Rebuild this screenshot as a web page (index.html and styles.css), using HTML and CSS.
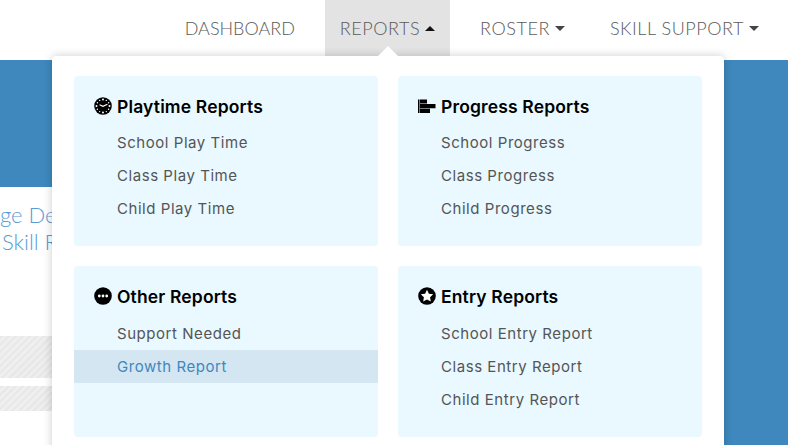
FILE: index.html
```html
<!DOCTYPE html>
<html lang="en">

<head>
    <meta charset="UTF-8">
    <meta name="viewport" content="width=device-width, initial-scale=1.0">
    <title>Reports</title>
    <link rel="stylesheet" href="styles.css">
</head>

<body>
    <nav class="navbar">
        <a class="nav_link">DASHBOARD</a>
        <a class="nav_link active">REPORTS<span class="caret up"></span></a>
        <a class="nav_link">ROSTER<span class="caret"></span></a>
        <a class="nav_link">SKILL SUPPORT<span class="caret"></span></a>
    </nav>

    <div class="hero"></div>

    <div class="page">
        <div class="main">
            <div class="title">ge Details</div>
            <div class="title">Skill Report</div>
            <div class="hatch tall"></div>
            <div class="hatch short"></div>
        </div>
        <div class="side"></div>
    </div>

    <!-- dropdown under REPORTS -->
    <div class="dropdown">
        <span class="notch"></span>
        <div class="panel">
            <h4>
                <svg class="icon" viewBox="0 0 18 18">
                    <circle cx="9" cy="9" r="8.8" fill="#000" />
                    <g fill="#fff">
                        <circle cx="9" cy="2.5" r="1" />
                        <circle cx="9" cy="15.5" r="1" />
                        <circle cx="2.5" cy="9" r="1" />
                        <circle cx="15.5" cy="9" r="1" />
                        <circle cx="5.7" cy="3.4" r=".7" />
                        <circle cx="12.3" cy="3.4" r=".7" />
                        <circle cx="3.4" cy="5.7" r=".7" />
                        <circle cx="14.6" cy="5.7" r=".7" />
                        <circle cx="3.4" cy="12.3" r=".7" />
                        <circle cx="14.6" cy="12.3" r=".7" />
                        <circle cx="5.7" cy="14.6" r=".7" />
                        <circle cx="12.3" cy="14.6" r=".7" />
                    </g>
                    <path d="M5.500 7.800 9 9.300 13.400 7.200" fill="none" stroke="#fff" stroke-width="1.2" />
                </svg>
                Playtime Reports
            </h4>
            <ul>
                <li>School Play Time</li>
                <li>Class Play Time</li>
                <li>Child Play Time</li>
            </ul>
        </div>
        <div class="panel">
            <h4>
                <svg class="icon" viewBox="0 0 18 18">
                    <path d="M0 2.500h1.500v13.500H0z" fill="#000" />
                    <path d="M2 2.500h7v4H2zM2 7h15.500v4.200H2zM2 11.700h10V16H2z" fill="#000" />
                </svg>
                Progress Reports
            </h4>
            <ul>
                <li>School Progress</li>
                <li>Class Progress</li>
                <li>Child Progress</li>
            </ul>
        </div>
        <div class="panel lower">
            <h4>
                <svg class="icon" viewBox="0 0 18 18">
                    <circle cx="9" cy="9" r="8.800" fill="#000" />
                    <circle cx="5.300" cy="9" r="1.400" fill="#fff" />
                    <circle cx="9" cy="9" r="1.400" fill="#fff" />
                    <circle cx="12.700" cy="9" r="1.400" fill="#fff" />
                </svg>
                Other Reports
            </h4>
            <ul>
                <li>Support Needed</li>
                <li class="hover">Growth Report</li>
            </ul>
        </div>
        <div class="panel lower">
            <h4>
                <svg class="icon" viewBox="0 0 18 18">
                    <circle cx="9" cy="9" r="8.800" fill="#000" />
                    <path d="M9 2.800 10.900 6.700 15.200 7.300 12.100 10.300 12.800 14.600 9 12.500 5.200 14.600 5.900 10.300 2.800 7.300 7.100 6.700z" fill="#fff" />
                </svg>
                Entry Reports
            </h4>
            <ul>
                <li>School Entry Report</li>
                <li>Class Entry Report</li>
                <li>Child Entry Report</li>
            </ul>
        </div>
    </div>
</body>

</html>
```

FILE: styles.css
```css
* {
    margin: 0;
    padding: 0;
    box-sizing: border-box;
}

html,
body {
    height: 445px;
    overflow: hidden;
}

body {
    position: relative;
    background: #fff;
    font-family: "Lato", "Liberation Sans", sans-serif;
}

.navbar {
    height: 60px;
    display: flex;
    justify-content: flex-end;
    align-items: flex-start;
    gap: 15px;
    padding-right: 14px;
}

.nav_link {
    height: 56px;
    padding: 0 15px;
    display: flex;
    align-items: center;
    font-size: 18px;
    font-weight: 300;
    letter-spacing: .55px;
    color: #5a5a5a;
}

.nav_link:first-child {
    letter-spacing: 0;
}

.nav_link.active {
    background: #e3e3e3;
}

.caret {
    margin-left: 5px;
    border-left: 5px solid transparent;
    border-right: 5px solid transparent;
    border-top: 5px solid #444;
}

.caret.up {
    border-top: 0;
    border-bottom: 5px solid #111;
}

.hero {
    height: 127px;
    background: #3e88bd;
}

.page {
    display: flex;
    height: 258px;
}

.main {
    flex: 1;
    padding-top: 14px;
}

.side {
    width: 64px;
    background: #3e88bd;
}

.title {
    font-size: 22px;
    font-weight: 300;
    line-height: 27px;
    color: #5a9bd5;
    white-space: nowrap;
}

.title + .title {
    padding-left: 2px;
}

.hatch {
    background: repeating-linear-gradient(135deg, #e8e8e8 0, #e8e8e8 2.5px, #efefef 2.5px, #efefef 5px);
}

.hatch.tall {
    height: 42px;
    margin-top: 81px;
}

.hatch.short {
    height: 25px;
    margin-top: 8px;
}

.dropdown {
    position: absolute;
    left: 52px;
    top: 56px;
    width: 672px;
    height: 400px;
    padding: 20px 22px;
    display: grid;
    grid-template-columns: 304px 304px;
    grid-template-rows: 170px 171px;
    gap: 20px;
    background: #fff;
    border-radius: 4px;
    box-shadow: 0 0 10px rgba(0, 0, 0, .2);
}

.notch {
    position: absolute;
    left: 326px;
    top: -10px;
    border-left: 10px solid transparent;
    border-right: 10px solid transparent;
    border-bottom: 10px solid #fff;
}

.panel {
    padding-top: 19px;
    background: #e9f9ff;
    border-radius: 4px;
}

.panel h4 {
    display: flex;
    align-items: center;
    gap: 5px;
    height: 22px;
    padding-left: 20px;
    font-family: "Inter", "Liberation Sans", sans-serif;
    font-size: 17.5px;
    font-weight: 600;
    letter-spacing: .15px;
    color: #000;
}

.icon {
    width: 18px;
    height: 18px;
}

.panel ul {
    margin-top: 9px;
    list-style: none;
}

.panel.lower ul {
    margin-top: 10px;
}

.panel li {
    height: 33px;
    padding-left: 43px;
    font-family: "Inter", "Liberation Sans", sans-serif;
    font-size: 15px;
    letter-spacing: .55px;
    line-height: 33px;
    color: #555;
}

.panel li.hover {
    background: #d3e6f2;
    color: #3e88bd;
}
```
